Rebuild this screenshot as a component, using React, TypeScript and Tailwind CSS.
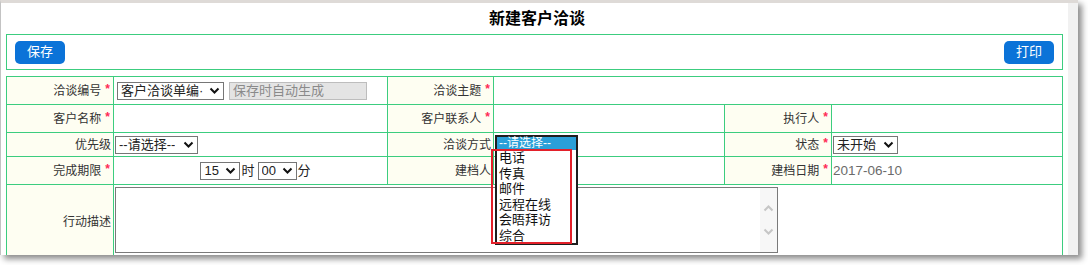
import React from "react";

function Chevron({ color = "#111" }: { color?: string }) {
  return (
    <svg width="11" height="7" viewBox="0 0 11 7" className="shrink-0">
      <path d="M1.5 1.5 L5.5 5.5 L9.5 1.5" fill="none" stroke={color} strokeWidth="2" />
    </svg>
  );
}

function Select({ text, w }: { text: string; w: string }) {
  return (
    <div
      className={`${w} h-[18px] border border-[#767676] bg-white flex items-center justify-between pl-[3px] pr-[3px] text-[13px] leading-none text-[#222] overflow-hidden shrink-0`}
    >
      <span className="whitespace-nowrap overflow-hidden">{text}</span>
      <Chevron />
    </div>
  );
}

function Label({ text, req, className = "" }: { text: string; req?: boolean; className?: string }) {
  return (
    <div className={`bg-[#fefef2] flex items-center justify-end pr-[2px] text-[12px] text-[#333] ${className}`}>
      <span>{text}</span>
      {req && <span className="text-[#ff2a55] text-[12px] ml-[4px] mr-[1px] font-bold leading-none -mt-[3px]">*</span>}
    </div>
  );
}

const options = ["电话", "传真", "邮件", "远程在线", "会晤拜访", "综合"];

export default function App() {
  return (
    <div className="w-[1088px] h-[265px] bg-white overflow-hidden font-['Liberation_Sans','Noto_Sans_CJK_SC',sans-serif]">
      <div className="w-[1078px] h-[255px] flex border-l border-l-[#c3c3c3] border-t-[3px] border-t-[#dedad7] shadow-[4px_4px_6px_rgba(0,0,0,0.45)] overflow-hidden">
        <div className="w-[1067px] h-full bg-white pl-[5px]">
          {/* Title */}
          <div className="h-[31px] flex items-center justify-center text-[16px] font-bold text-black">
            新建客户洽谈
          </div>

          {/* Toolbar */}
          <div className="w-[1057px] h-[36px] border border-[#3ccd7f] flex items-center justify-between px-[8px]">
            <button className="w-[50px] h-[23px] rounded-[5px] bg-[#0b73d8] text-white text-[13px] flex items-center justify-center">
              保存
            </button>
            <button className="w-[50px] h-[23px] rounded-[5px] bg-[#0b73d8] text-white text-[13px] flex items-center justify-center">
              打印
            </button>
          </div>

          {/* Form table */}
          <div className="mt-[6px] w-[1057px] grid grid-cols-[106px_273px_105px_230px_106px_230px] grid-rows-[27px_27px_23px_27px_74px] gap-px p-px bg-[#3ccd7f]">
            {/* Row 1 */}
            <Label text="洽谈编号" req />
            <div className="bg-white flex items-center pl-[3px] gap-[5px]">
              <Select text="客户洽谈单编·" w="w-[107px]" />
              <div className="w-[138px] h-[18px] border border-[#bdbdbd] bg-[#e4e4e4] flex items-center pl-[3px] text-[13px] leading-none text-[#8a8a8a]">
                保存时自动生成
              </div>
            </div>
            <Label text="洽谈主题" req />
            <div className="bg-white col-span-3" />

            {/* Row 2 */}
            <Label text="客户名称" req />
            <div className="bg-white" />
            <Label text="客户联系人" req />
            <div className="bg-white" />
            <Label text="执行人" req />
            <div className="bg-white" />

            {/* Row 3 */}
            <Label text="优先级" />
            <div className="bg-white flex items-center pl-[1px]">
              <Select text="--请选择--" w="w-[83px]" />
            </div>
            <Label text="洽谈方式" />
            <div className="bg-white relative">
              <div className="absolute left-[1px] top-[2px] z-10 w-[83px] h-[110px] border-2 border-[#1e1e1e] bg-white text-[13px] text-[#111]">
                <div className="h-[13px] bg-[#2a9fd8] text-white text-[12px] leading-[13px] pl-[2px] whitespace-nowrap">
                  --请选择--
                </div>
                {options.map((o) => (
                  <div key={o} className="h-[15.5px] leading-[15.5px] pl-[2px] whitespace-nowrap">
                    {o}
                  </div>
                ))}
              </div>
              <div className="absolute left-[-3px] top-[16px] z-20 w-[81px] h-[95px] border-2 border-[#e3202a]" />
            </div>
            <Label text="状态" req />
            <div className="bg-white flex items-center pl-[1px]">
              <Select text="未开始" w="w-[65px]" />
            </div>

            {/* Row 4 */}
            <Label text="完成期限" req />
            <div className="bg-white flex items-center justify-center pl-[10px] text-[13px] text-[#222] leading-none">
              <Select text="15" w="w-[40px]" />
              <span className="ml-[1px]">时</span>
              <div className="ml-[3px]">
                <Select text="00" w="w-[39px]" />
              </div>
              <span className="ml-[1px]">分</span>
            </div>
            <Label text="建档人" />
            <div className="bg-white" />
            <Label text="建档日期" req />
            <div className="bg-white flex items-center pl-[1px] text-[13.5px] text-[#6b6b6b] leading-none">
              2017-06-10
            </div>

            {/* Row 5 */}
            <Label text="行动描述" />
            <div className="bg-white col-span-5 pl-[1px] pt-[2px]">
              <div className="w-[663px] h-[66px] border border-[#7a7a7a] flex justify-end">
                <div className="w-[17px] h-full bg-[#f7f7f7] flex flex-col items-center justify-center gap-[16px]">
                  <svg width="11" height="7" viewBox="0 0 11 7">
                    <path d="M1.5 5.5 L5.5 1.5 L9.5 5.5" fill="none" stroke="#c6c6c6" strokeWidth="2" />
                  </svg>
                  <Chevron color="#c6c6c6" />
                </div>
              </div>
            </div>
          </div>
        </div>
        <div className="w-[10px] h-full bg-[#f1f1f1]" />
      </div>
    </div>
  );
}
